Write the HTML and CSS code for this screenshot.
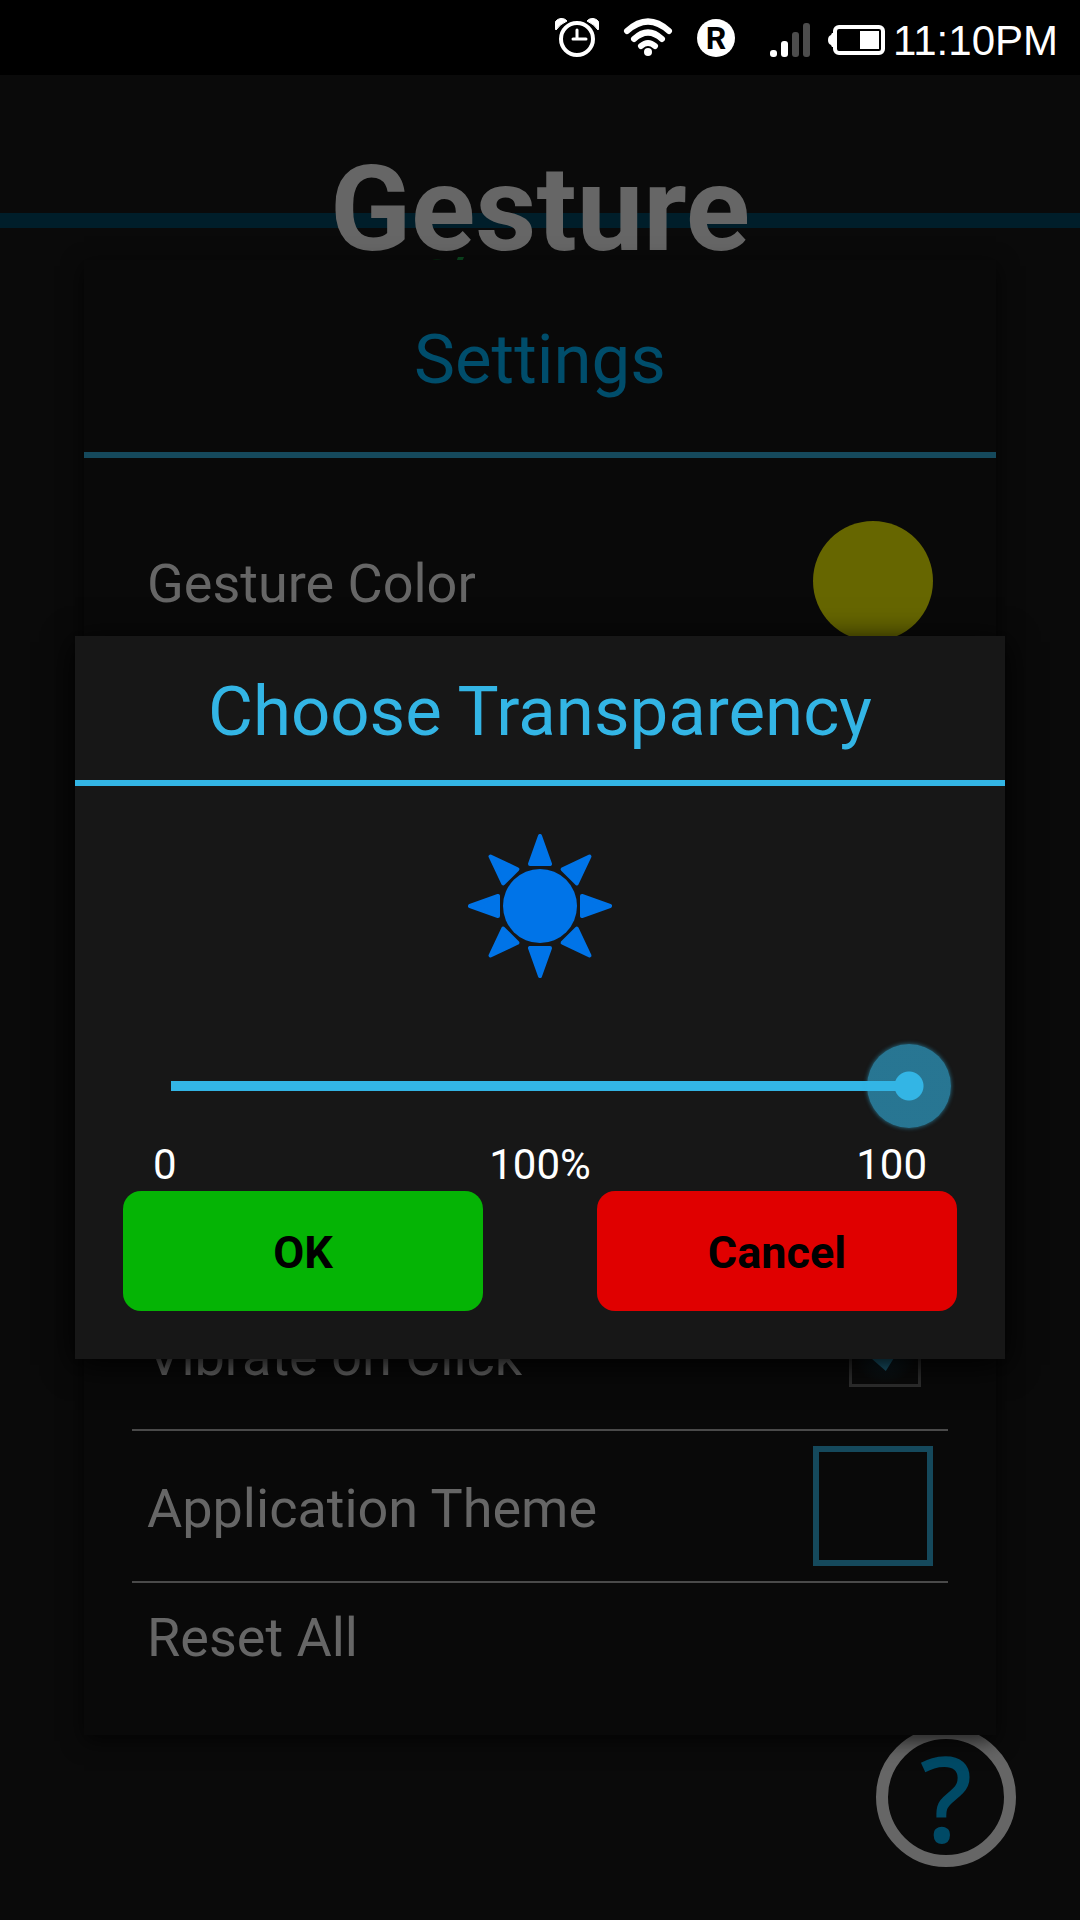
FILE: index.html
```html
<!DOCTYPE html>
<html lang="en">
<head>
  <meta charset="UTF-8">
  <meta name="viewport" content="width=device-width, initial-scale=1.0">
  <title>Gesture</title>
  <link rel="stylesheet" href="styles.css">
</head>
<body>
  <div class="statusbar">
    <svg class="icon-alarm" width="44" height="40" viewBox="0 0 44 40">
      <circle cx="22" cy="21" r="16" fill="none" stroke="#fff" stroke-width="4"/>
      <path d="M22 12v9M18 21h13" fill="none" stroke="#fff" stroke-width="3" stroke-linecap="round"/>
      <path d="M1 12A7 7 0 0 1 12 3Q5 6 1 12ZM43 12A7 7 0 0 0 32 3Q39 6 43 12Z" fill="#fff" stroke="#fff" stroke-width="1"/>
    </svg>
    <svg class="icon-wifi" width="50" height="40" viewBox="0 0 50 40">
      <g fill="none" stroke="#fff" stroke-width="6" stroke-linecap="round">
        <path d="M4 13Q25 -6 46 13"/>
        <path d="M11 21Q25 8 39 21"/>
        <path d="M18 28Q25 22 32 28"/>
      </g>
      <circle cx="25" cy="34" r="4" fill="#fff"/>
    </svg>
    <span class="roaming">R</span>
    <svg class="icon-signal" width="40" height="36" viewBox="0 0 40 36">
      <rect x="0" y="28" width="7" height="7" rx="3" fill="#fff"/>
      <rect x="11" y="19" width="7" height="16" rx="3" fill="#fff"/>
      <rect x="22" y="10" width="7" height="25" rx="3" fill="#4d4d4d"/>
      <rect x="33" y="1" width="7" height="34" rx="3" fill="#4d4d4d"/>
    </svg>
    <svg class="icon-battery" width="57" height="30" viewBox="0 0 57 30">
      <rect x="7" y="2" width="48" height="26" rx="4" fill="none" stroke="#fff" stroke-width="4"/>
      <path d="M7 8H4L3 10Q0 11 0 15T3 20L4 22H7Z" fill="#fff"/>
      <rect x="32" y="6" width="19" height="18" fill="#fff"/>
    </svg>
    <span class="clock">11:10PM</span>
  </div>

  <div class="screen">
    <div class="titlebar">
      <h1>Gesture</h1>
      <svg class="logo" width="34" height="10" viewBox="0 0 34 10">
        <path d="M0 3Q5 1 10 3V10H0Z" fill="#06240f"/>
        <path d="M26 0H32L28 10H22Z" fill="#0b4a20"/>
      </svg>
    </div>

    <button class="help" type="button">?</button>

    <div class="layer">
      <div class="settings">
        <h2>Settings</h2>
        <div class="rows">
          <div class="row first">
            <span>Gesture Color</span>
            <button class="dot" type="button" aria-label="Gesture Color"></button>
          </div>
          <div class="row">
            <label for="vibrate">Vibrate on Click</label>
            <input class="check" type="checkbox" id="vibrate" checked>
          </div>
          <div class="row">
            <span>Application Theme</span>
            <button class="square" type="button" aria-label="Application Theme"></button>
          </div>
          <div class="row last">
            <a href="#reset">Reset All</a>
          </div>
        </div>
      </div>
    </div>

    <div class="layer">
      <div class="dialog" role="dialog" aria-labelledby="dialogTitle">
        <h2 id="dialogTitle">Choose Transparency</h2>
        <svg class="sun" width="144" height="144" viewBox="-72 -72 144 144">
          <defs>
            <path id="ray" d="M0 -70L10 -42H-10Z"/>
          </defs>
          <circle r="37"/>
          <g stroke="#0074e8" stroke-width="4" stroke-linejoin="round">
            <use href="#ray"/>
            <use href="#ray" transform="rotate(45)"/>
            <use href="#ray" transform="rotate(90)"/>
            <use href="#ray" transform="rotate(135)"/>
            <use href="#ray" transform="rotate(180)"/>
            <use href="#ray" transform="rotate(225)"/>
            <use href="#ray" transform="rotate(270)"/>
            <use href="#ray" transform="rotate(315)"/>
          </g>
        </svg>
        <input class="slider" type="range" id="transparency" min="0" max="100" value="100" aria-labelledby="dialogTitle">
        <div class="scale">
          <span>0</span>
          <output for="transparency" id="percent">100%</output>
          <span class="max">100</span>
        </div>
        <div class="buttons">
          <button class="ok" type="button">OK</button>
          <button class="cancel" type="button">Cancel</button>
        </div>
      </div>
    </div>
  </div>
</body>
</html>
```
FILE: styles.css
```css
* {
    box-sizing: border-box;
}
body {
    margin: 0;
    min-height: 100vh;
    display: flex;
    flex-direction: column;
    background: #0a0a0a;
    font-family: Roboto, "Liberation Sans", sans-serif;
}
h1, h2 {
    margin: 0;
    text-align: center;
}
button {
    padding: 0;
    border: 0;
    font-family: inherit;
    cursor: pointer;
}

/* status bar */
.statusbar {
    height: 75px;
    padding-right: 22px;
    display: flex;
    justify-content: flex-end;
    align-items: center;
    background: #000;
    color: #fff;
}
.icon-wifi {
    margin-left: 24px;
}
.roaming {
    width: 38px;
    height: 38px;
    margin-left: 24px;
    border-radius: 50%;
    background: #fff;
    color: #000;
    font-size: 32px;
    font-weight: bold;
    line-height: 38px;
    text-align: center;
}
.icon-signal {
    margin-left: 35px;
    margin-top: 4px;
}
.icon-battery {
    margin-left: 18px;
    margin-top: 4px;
}
.clock {
    margin-left: 8px;
    padding-top: 6px;
    font-family: "Liberation Sans", sans-serif;
    font-size: 42px;
}

/* page behind the popups */
.screen {
    flex: 1;
    position: relative;
}
.titlebar {
    position: relative;
    padding-top: 65px;
}
.titlebar:before {
    content: "";
    position: absolute;
    top: 138px;
    left: 0;
    right: 0;
    height: 15px;
    background: #001e2a;
}
.titlebar h1 {
    position: relative;
    color: #666;
    font-size: 119px;
    line-height: 140px;
}
.logo {
    position: absolute;
    top: 182px;
    left: 40%;
}
.help {
    position: absolute;
    right: 64px;
    bottom: 53px;
    width: 140px;
    height: 140px;
    border: 12px solid #666;
    border-radius: 50%;
    background: none;
    color: #004a66;
    font-family: "Noto Sans", sans-serif;
    font-size: 118px;
    font-weight: 500;
    line-height: 114px;
}
.layer {
    position: absolute;
    top: 0;
    right: 0;
    bottom: 0;
    left: 0;
    display: flex;
    flex-direction: column;
    justify-content: center;
}

/* settings */
.settings {
    margin: 0 84px;
    padding-bottom: 44px;
    background: #090909;
    box-shadow: 0 6px 20px rgba(0, 0, 0, 0.7);
}
.settings h2 {
    padding-top: 8px;
    border-bottom: 6px solid #15495c;
    color: #004d6b;
    font-size: 69px;
    font-weight: normal;
    line-height: 184px;
}
.rows {
    margin: 48px 48px 0;
}
.row {
    height: 152px;
    padding: 0 15px;
    display: flex;
    justify-content: space-between;
    align-items: center;
    border-bottom: 2px solid #4a4a4a;
    color: #666;
    font-size: 54px;
}
.row span, .row label {
    padding-top: 4px;
}
.row a {
    color: inherit;
    text-decoration: none;
}
.first {
    margin-bottom: 621px;
}
.last {
    height: 108px;
    border-bottom: 0;
}
.dot {
    width: 120px;
    height: 120px;
    border-radius: 50%;
    background: #660;
}
.square {
    width: 120px;
    height: 120px;
    border: 6px solid #15495c;
    background: none;
}
.check {
    appearance: none;
    width: 72px;
    height: 72px;
    margin: 0 12px 6px 0;
    padding: 15px 12px;
    border: 3px solid #2e2e2e;
    background: radial-gradient(#0b2029, #0a0a0a 70%);
}
.check:checked:after {
    content: "";
    display: block;
    height: 38px;
    background: #1b5f78;
    clip-path: polygon(0 50%, 20% 30%, 52% 60%, 85% 0, 100% 15%, 52% 100%);
}

/* transparency dialog */
.dialog {
    margin: 0 75px;
    padding-bottom: 48px;
    background: #171717;
    box-shadow: 0 6px 30px #000;
}
.dialog h2 {
    padding-top: 8px;
    border-bottom: 6px solid #33b5e5;
    color: #33b5e5;
    font-size: 69px;
    font-weight: normal;
    line-height: 136px;
}
.sun {
    display: block;
    margin: 48px auto 66px;
    fill: #0074e8;
}
.slider {
    appearance: none;
    display: block;
    width: calc(100% - 108px);
    height: 84px;
    margin: 0 54px 11px;
    background: linear-gradient(#33b5e5, #33b5e5) center / calc(100% - 84px) 10px no-repeat;
}
.slider::-webkit-slider-thumb {
    appearance: none;
    width: 84px;
    height: 84px;
    border-radius: 50%;
    background: radial-gradient(circle, #33b5e5 14px, rgba(51, 181, 229, 0.6) 15px);
    box-shadow: 0 0 4px rgba(51, 181, 229, 0.6);
}
.scale {
    padding: 0 78px;
    display: grid;
    grid-template-columns: 1fr auto 1fr;
    color: #fff;
    font-size: 42px;
    line-height: 52px;
}
.max {
    text-align: right;
}
.buttons {
    margin: 0 48px;
    display: grid;
    grid-template-columns: 1fr 1fr;
    gap: 114px;
}
.buttons button {
    height: 120px;
    padding-top: 2px;
    border-radius: 18px;
    color: #000;
    font-size: 45px;
    font-weight: bold;
}
.ok {
    background: #05b405;
}
.cancel {
    background: #e00000;
}
```
